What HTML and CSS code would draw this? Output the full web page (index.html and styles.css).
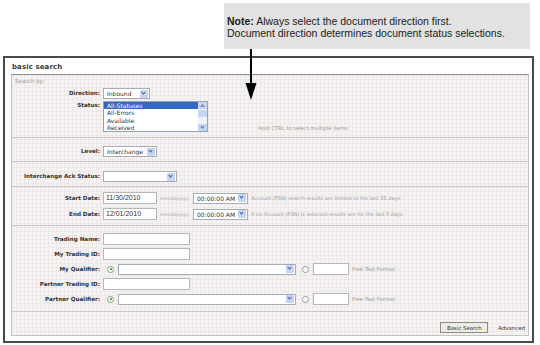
FILE: index.html
```html
<!DOCTYPE html>
<html>
<head>
<meta charset="utf-8">
<link rel="stylesheet" href="styles.css">
</head>
<body>
<div class="top">
  <div class="note"><b>Note:</b> Always select the document direction first.<br>Document direction determines document status selections.</div>
</div>
<svg class="arrow" width="14" height="52" viewBox="0 0 14 52"><line x1="7" y1="0" x2="7" y2="36" stroke="#000" stroke-width="2"/><polygon points="1.5,34 12.5,34 7,51" fill="#000"/></svg>
<div class="frame">
  <div class="title">basic search</div>
  <div class="panel">
    <div class="searchby">Search by:</div>
    <div class="sec s1">
      <div class="row"><span class="lbl">Direction:</span><span class="sel w-dir"><span class="val">Inbound</span><span class="dd"></span></span></div>
      <div class="row status">
        <span class="lbl">Status:</span>
        <div class="list">
          <div class="opts">
            <div class="opt on">All-Statuses</div>
            <div class="opt">All-Errors</div>
            <div class="opt">Available</div>
            <div class="opt">Received</div>
          </div>
          <div class="sb">
            <span class="sbb up"></span>
            <span class="thumb"></span>
            <span class="sbfill"></span>
            <span class="sbb down"></span>
          </div>
        </div>
        <span class="hint hold">Hold CTRL to select multiple items.</span>
      </div>
    </div>
    <div class="sec s2">
      <div class="row"><span class="lbl">Level:</span><span class="sel w-lvl"><span class="val">Interchange</span><span class="dd"></span></span></div>
    </div>
    <div class="sec s3">
      <div class="row"><span class="lbl">Interchange Ack Status:</span><span class="sel w-ack"><span class="val"></span><span class="dd"></span></span></div>
    </div>
    <div class="sec s4">
      <div class="row"><span class="lbl">Start Date:</span><span class="inp w-date">11/30/2010</span><span class="fmt">mm/dd/yyyy</span><span class="sel w-time"><span class="val">00:00:00 AM</span><span class="dd"></span></span><span class="hint info">Account (PSN) search results are limited to the last 35 days.</span></div>
      <div class="row gap4"><span class="lbl">End Date:</span><span class="inp w-date">12/01/2010</span><span class="fmt">mm/dd/yyyy</span><span class="sel w-time"><span class="val">00:00:00 AM</span><span class="dd"></span></span><span class="hint info">If no Account (PSN) is selected results are for the last 5 days.</span></div>
    </div>
    <div class="sec s5">
      <div class="row"><span class="lbl">Trading Name:</span><span class="inp w-txt"></span></div>
      <div class="row gap3"><span class="lbl">My Trading ID:</span><span class="inp w-txt"></span></div>
      <div class="row gap3"><span class="lbl">My Qualifier:</span><span class="radio on"></span><span class="sel w-qual"><span class="val"></span><span class="dd"></span></span><span class="radio r2"></span><span class="inp w-free"></span><span class="hint free">Free Text Format</span></div>
      <div class="row gap3"><span class="lbl">Partner Trading ID:</span><span class="inp w-txt"></span></div>
      <div class="row gap3"><span class="lbl">Partner Qualifier:</span><span class="radio on"></span><span class="sel w-qual"><span class="val"></span><span class="dd"></span></span><span class="radio r2"></span><span class="inp w-free"></span><span class="hint free">Free Text Format</span></div>
    </div>
    <div class="sec s6">
      <span class="btn">Basic Search</span><span class="adv">Advanced</span>
    </div>
  </div>
</div>
</body>
</html>
```

FILE: styles.css
```css
html, body {
  margin: 0;
  padding: 0;
  background: #fff;
}
body {
  width: 540px;
  height: 345px;
  position: relative;
  overflow: hidden;
  font-family: "DejaVu Sans", Verdana, sans-serif;
}
.top {
  height: 56px;
  display: flex;
  align-items: flex-start;
}
.note {
  margin: 3px 0 0 224px;
  width: 306px;
  height: 46px;
  box-sizing: border-box;
  padding: 12px 0 0 3px;
  background: #e2e2e2;
  font-family: "Liberation Sans", Arial, sans-serif;
  font-size: 10.5px;
  line-height: 12px;
  color: #1a1a1a;
}
.arrow {
  position: absolute;
  left: 244px;
  top: 49px;
  z-index: 2;
}
.frame {
  margin-left: 3px;
  width: 531px;
  height: 287px;
  box-sizing: border-box;
  border: 2px solid #4a4a4a;
  padding-top: 3px;
}
.title {
  height: 13px;
  line-height: 13px;
  margin-left: 7px;
  font-size: 7px;
  font-weight: bold;
  color: #3a3a3a;
  letter-spacing: 0.1px;
}
.panel {
  margin: 0 3px 0 6px;
  border: 1px solid #c4c2c2;
  border-top: 1px solid #8c8c8c;
  background-color: #f5f2f2;
  background-image:
    linear-gradient(rgba(120, 90, 90, 0.05) 1px, transparent 1px),
    linear-gradient(90deg, rgba(120, 90, 90, 0.05) 1px, transparent 1px);
  background-size: 4px 4px;
}
.searchby {
  height: 12px;
  line-height: 12px;
  padding-left: 3px;
  font-size: 5.6px;
  color: #9a9a9a;
}
.sec {
  border-bottom: 1px solid #cbc7c7;
}
.s1 { padding: 1px 0 5px; }
.s2 { padding: 8px 0 4px; }
.s3 { padding: 9px 0 4px; }
.s4 { padding: 5px 0 5px; }
.s5 { padding: 7px 0 6px; }
.s6 {
  border-bottom: none;
  padding: 10px 3px 2px 0;
  display: flex;
  justify-content: flex-end;
  align-items: center;
}
.row {
  display: flex;
  align-items: center;
}
.gap3 { margin-top: 3px; }
.gap4 { margin-top: 4px; }
.status {
  margin-top: 2px;
  align-items: flex-start;
}
.lbl {
  flex: none;
  width: 88px;
  padding-right: 3px;
  text-align: right;
  font-size: 5.6px;
  font-weight: bold;
  color: #333;
  line-height: 7px;
}
.status .lbl { margin-top: 1px; }

.sel {
  flex: none;
  display: inline-flex;
  align-items: center;
  justify-content: space-between;
  height: 11px;
  box-sizing: border-box;
  border: 1px solid #a7adb6;
  background: #fff;
  padding: 0 1px 0 3px;
  font-size: 6px;
  color: #333;
}
.w-dir { width: 47px; }
.w-lvl { width: 54px; }
.w-ack { width: 74px; }
.w-time { width: 55px; }
.w-qual { width: 178px; margin-left: 4px; }
.val { white-space: nowrap; }
.dd {
  position: relative;
  width: 8px;
  height: 8px;
  background: #c5d4f1;
  border-radius: 1px;
  flex: none;
}
.dd::after {
  content: "";
  position: absolute;
  left: 2.3px;
  top: 1.3px;
  width: 2px;
  height: 2px;
  border-right: 1.3px solid #3d5c9c;
  border-bottom: 1.3px solid #3d5c9c;
  transform: rotate(45deg);
}

.list {
  flex: none;
  display: flex;
  width: 105px;
  height: 31px;
  box-sizing: border-box;
  border: 1px solid #8fa3bd;
  background: #fff;
}
.opts {
  flex: 1;
  font-size: 6px;
  color: #333;
}
.opt {
  height: 7.3px;
  line-height: 7.3px;
  padding-left: 3px;
}
.opt.on {
  background: #3467c3;
  color: #fff;
}
.sb {
  width: 9px;
  display: flex;
  flex-direction: column;
  background: #eef2fa;
}
.sbb {
  position: relative;
  height: 7px;
  background: #c7d6f2;
}
.sbb::after {
  content: "";
  position: absolute;
  left: 3px;
  width: 2px;
  height: 2px;
  border-right: 1.2px solid #4a66a0;
  border-bottom: 1.2px solid #4a66a0;
}
.sbb.up::after { top: 2.5px; transform: rotate(-135deg); }
.sbb.down::after { top: 1px; transform: rotate(45deg); }
.thumb {
  height: 7px;
  margin-top: 1px;
  background: #c7d6f2;
}
.sbfill { flex: 1; }

.hint {
  flex: none;
  font-size: 5.2px;
  color: #9b9b9b;
  white-space: nowrap;
}
.hold {
  align-self: flex-end;
  margin: 0 0 1px 50px;
  line-height: 6px;
}
.info { margin-left: 3px; font-size: 5px; }
.free { margin-left: 3px; }

.inp {
  flex: none;
  display: inline-block;
  height: 12px;
  box-sizing: border-box;
  border: 1px solid #b7b7b7;
  background: #fff;
  padding-left: 2px;
  font-family: "Liberation Sans", Arial, sans-serif;
  font-size: 7px;
  line-height: 10px;
  color: #333;
}
.w-date { width: 54px; }
.w-txt { width: 87px; }
.w-free { width: 36px; margin-left: 4px; }
.fmt {
  flex: none;
  width: 33px;
  margin-left: 3px;
  font-size: 4.6px;
  color: #a8a8a8;
  white-space: nowrap;
}

.radio {
  flex: none;
  position: relative;
  width: 7px;
  height: 7px;
  box-sizing: border-box;
  border: 1px solid #8d9aa6;
  border-radius: 50%;
  background: #fff;
  margin-left: 4px;
}
.radio.on { border-color: #6fae6f; }
.radio.on::after {
  content: "";
  position: absolute;
  left: 1.5px;
  top: 1.5px;
  width: 2px;
  height: 2px;
  border-radius: 50%;
  background: #2e8b2e;
}
.radio.r2 { margin-left: 6px; }

.btn {
  width: 48px;
  height: 11px;
  box-sizing: border-box;
  border: 1px solid #8a8a8a;
  background: #ecebe6;
  font-size: 5.4px;
  color: #333;
  display: flex;
  align-items: center;
  justify-content: center;
}
.adv {
  margin-left: 10px;
  font-size: 5.4px;
  color: #333;
}
```
